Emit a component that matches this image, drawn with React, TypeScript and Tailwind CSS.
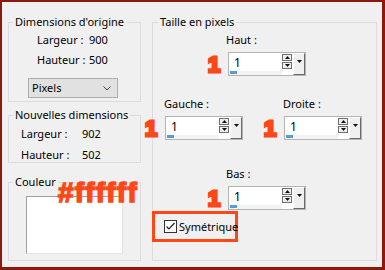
import React from "react";

function Tri({ up }: { up?: boolean }) {
  return (
    <svg width="5" height="3" viewBox="0 0 5 3" className="block">
      {up ? <polygon points="0,3 5,3 2.5,0" fill="#111" /> : <polygon points="0,0 5,0 2.5,3" fill="#111" />}
    </svg>
  );
}

function Spinner() {
  return (
    <div className="relative flex h-[24px] w-[78px] border border-[#b4b4b4] bg-white">
      <span className="absolute left-[-21px] top-[0px] font-['Liberation_Sans',Arial,sans-serif] text-[22px] font-bold leading-[24px] text-[#fe4716] [-webkit-text-stroke:3px_#fe4716]">
        1
      </span>
      <div className="relative flex-1">
        <div className="absolute bottom-0 left-0 right-0 h-[4px] bg-[#f2f3f5]" />
        <div className="absolute bottom-[1px] left-[1px] h-[3px] w-[7px] bg-[#5b9bd5]" />
        <span className="relative ml-[5px] mt-[3px] block text-[12px] leading-[14px] text-black">1</span>
      </div>
      <div className="mt-[1px] flex w-[10px] flex-col gap-[1px]">
        <div className="flex h-[7px] items-center justify-center border border-[#6f6f6f] bg-[#efefef]">
          <Tri up />
        </div>
        <div className="flex h-[7px] items-center justify-center border border-[#6f6f6f] bg-[#efefef]">
          <Tri />
        </div>
      </div>
      <div className="ml-[1px] flex w-[12px] justify-center border border-b-[#6a6a6a] border-l-white border-r-[#6a6a6a] border-t-white bg-[#f0f0f0] pt-[6px]">
        <Tri />
      </div>
    </div>
  );
}

function Legend({ children, ml = "ml-[4px]" }: { children: React.ReactNode; ml?: string }) {
  return <legend className={`${ml} whitespace-nowrap px-[2px] leading-[14px]`}>{children}</legend>;
}

export default function App() {
  return (
    <div className="box-border flex h-[270px] w-[385px] gap-[11px] border-b-[3px] border-l-[2px] border-r-[3px] border-t-[2px] border-[#8b1a0c] bg-[#f0f0f0] pl-[6px] pt-[13px] font-['Noto_Sans',sans-serif] text-[11px] text-black">
      {/* left column */}
      <div className="flex w-[133px] flex-col">
        <fieldset className="border border-[#dcdcdc]">
          <Legend>Dimensions d'origine</Legend>
          <div className="pb-[3px] pl-[28px] pt-[1px]">
            <div className="flex h-[20px] items-center">
              <span className="w-[52px]">Largeur :</span>
              <span>900</span>
            </div>
            <div className="flex h-[20px] items-center">
              <span className="w-[52px]">Hauteur :</span>
              <span>500</span>
            </div>
            <div className="ml-[-9px] mt-[8px] flex h-[20px] w-[90px] items-center justify-between border border-[#adadad] bg-[#e1e1e1] pl-[3px] pr-[6px]">
              <span>Pixels</span>
              <svg width="8" height="5" viewBox="0 0 8 5" className="block">
                <polyline points="0.5,0.5 4,4 7.5,0.5" fill="none" stroke="#444" strokeWidth="1" />
              </svg>
            </div>
          </div>
        </fieldset>

        <fieldset className="mt-[6px] border border-[#dcdcdc]">
          <Legend>Nouvelles dimensions</Legend>
          <div className="flex flex-col gap-[7px] pl-[12px] pt-[5px]">
            <div className="flex h-[14px] items-center">
              <span className="w-[61px]">Largeur :</span>
              <span>902</span>
            </div>
            <div className="flex h-[14px] items-center">
              <span className="w-[61px]">Hauteur :</span>
              <span>502</span>
            </div>
          </div>
        </fieldset>

        <fieldset className="relative mt-[12px] border border-[#dcdcdc]">
          <Legend>Couleur</Legend>
          <span className="absolute left-[49px] top-[-10px] whitespace-nowrap font-['Liberation_Sans',Arial,sans-serif] text-[28px] font-bold leading-[28px] tracking-[1.2px] text-[#fe4716] [-webkit-text-stroke:1.5px_#fe4716]">
            #ffffff
          </span>
          <div className="pb-[6px] pl-[17px] pt-[7px]">
            <div className="h-[58px] w-[97px] border border-b-[#e3e3e3] border-l-[#a0a0a0] border-r-[#e3e3e3] border-t-[#a0a0a0] bg-white" />
          </div>
        </fieldset>
      </div>

      {/* right group */}
      <fieldset className="h-[246px] w-[225px] border border-[#dcdcdc]">
        <Legend ml="ml-[5px]">Taille en pixels</Legend>
        <div className="flex flex-col">
          <div className="ml-[73px] mt-[4px] flex flex-col gap-[5px]">
            <span className="leading-[14px]">Haut :</span>
            <div className="ml-[2px]">
              <Spinner />
            </div>
          </div>
          <div className="mt-[21px] flex">
            <div className="ml-[11px] flex flex-col gap-[5px]">
              <span className="leading-[14px]">Gauche :</span>
              <div className="ml-[1px]">
                <Spinner />
              </div>
            </div>
            <div className="ml-[40px] flex flex-col gap-[5px]">
              <span className="leading-[14px]">Droite :</span>
              <div className="ml-[1px]">
                <Spinner />
              </div>
            </div>
          </div>
          <div className="ml-[73px] mt-[27px] flex flex-col gap-[5px]">
            <span className="leading-[14px]">Bas :</span>
            <div className="ml-[2px]">
              <Spinner />
            </div>
          </div>
          <div className="ml-[-1px] mt-[1px] flex h-[31px] w-[86px] items-center border-[3px] border-[#fe4716] pl-[9px]">
            <div className="flex h-[13px] w-[13px] items-center justify-center border border-[#333] bg-white">
              <svg width="11" height="11" viewBox="0 0 11 11" className="block">
                <polyline points="1.5,5.5 4,8 9.5,2" fill="none" stroke="#222" strokeWidth="1.2" />
              </svg>
            </div>
            <span className="ml-[2px] leading-[14px]">Symétrique</span>
          </div>
        </div>
      </fieldset>
    </div>
  );
}
